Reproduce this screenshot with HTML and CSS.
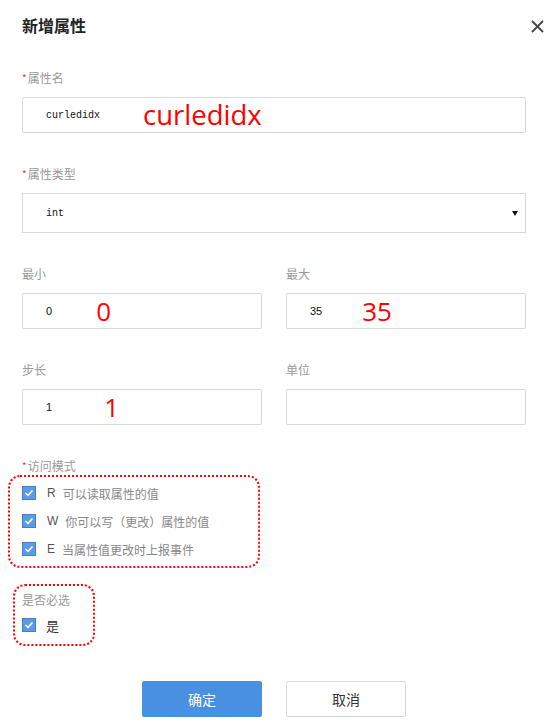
FILE: index.html
```html
<!DOCTYPE html>
<html lang="zh">
<head>
<meta charset="utf-8">
<title>新增属性</title>
<link rel="stylesheet" href="styles.css">
</head>
<body>
<div class="dialog">
  <div class="header">
    <h1 class="title">新增属性</h1>
    <button class="close" aria-label="关闭">
      <svg width="13" height="13" viewBox="0 0 13 13"><path d="M1 1 L12 12 M12 1 L1 12" stroke="#444" stroke-width="1.8" fill="none"/></svg>
    </button>
  </div>

  <div class="form">
    <div class="field first">
      <div class="label"><span class="req">*</span>属性名</div>
      <div class="input"><span class="val mono">curledidx</span><span class="note note-long">curledidx</span></div>
    </div>

    <div class="field">
      <div class="label"><span class="req">*</span>属性类型</div>
      <div class="select"><span class="val mono">int</span>
        <svg class="arrow" width="6" height="5" viewBox="0 0 6 5"><path d="M0 0 H6 L3 5 Z" fill="#111"/></svg>
      </div>
    </div>

    <div class="row">
      <div class="field">
        <div class="label">最小</div>
        <div class="input"><span class="val num">0</span><span class="note">0</span></div>
      </div>
      <div class="field">
        <div class="label">最大</div>
        <div class="input"><span class="val num">35</span><span class="note note-max">35</span></div>
      </div>
    </div>

    <div class="row">
      <div class="field">
        <div class="label">步长</div>
        <div class="input"><span class="val num">1</span><span class="note note-step">1</span></div>
      </div>
      <div class="field">
        <div class="label">单位</div>
        <div class="input"></div>
      </div>
    </div>

    <div class="field">
      <div class="label label-tight"><span class="req">*</span>访问模式</div>
      <div class="mark mark-access">
        <label class="check"><span class="box"><svg width="10" height="8" viewBox="0 0 10 8"><path d="M1.5 4 L4 6.3 L8.5 1.5" stroke="#fff" stroke-width="1.6" fill="none"/></svg></span><span class="letter">R</span>可以读取属性的值</label>
        <label class="check"><span class="box"><svg width="10" height="8" viewBox="0 0 10 8"><path d="M1.5 4 L4 6.3 L8.5 1.5" stroke="#fff" stroke-width="1.6" fill="none"/></svg></span><span class="letter">W</span>你可以写（更改）属性的值</label>
        <label class="check"><span class="box"><svg width="10" height="8" viewBox="0 0 10 8"><path d="M1.5 4 L4 6.3 L8.5 1.5" stroke="#fff" stroke-width="1.6" fill="none"/></svg></span><span class="letter">E</span>当属性值更改时上报事件</label>
      </div>
    </div>

    <div class="mark mark-required">
      <div class="label">是否必选</div>
      <label class="check dark"><span class="box"><svg width="10" height="8" viewBox="0 0 10 8"><path d="M1.5 4 L4 6.3 L8.5 1.5" stroke="#fff" stroke-width="1.6" fill="none"/></svg></span>是</label>
    </div>

    <div class="actions">
      <button class="btn primary">确定</button>
      <button class="btn">取消</button>
    </div>
  </div>
</div>
</body>
</html>
```

FILE: styles.css
```css
* { box-sizing: border-box; }
html, body { margin: 0; padding: 0; background: #fff; }
body {
  font-family: "Noto Sans CJK SC", "Noto Sans", sans-serif;
  color: #333;
  width: 554px;
  height: 725px;
  overflow: hidden;
}
.dialog { padding: 0 28px 0 22px; }
.header {
  height: 50px;
  display: flex;
  align-items: flex-start;
  justify-content: space-between;
  padding-top: 14px;
}
.title {
  margin: 0;
  font-size: 16px;
  line-height: 22px;
  font-weight: bold;
  color: #222;
}
.close {
  border: 0;
  background: none;
  padding: 0;
  margin: 6px -18px 0 0;
  width: 13px;
  height: 13px;
  display: block;
}
.close svg { display: block; }

.field { margin-top: 33px; }
.field.first { margin-top: 20px; }
.row .field { margin-top: 0; }
.row { display: grid; grid-template-columns: 240px 240px; column-gap: 24px; margin-top: 33px; }

.label {
  font-size: 12px;
  line-height: 16px;
  color: #999;
  margin-bottom: 11px;
}
.label-tight { margin-bottom: 1px; }
.req { color: #e33; font-size: 10px; margin-right: 1px; vertical-align: top; }

.input, .select {
  height: 36px;
  border: 1px solid #d9d9d9;
  border-radius: 2px;
  display: flex;
  align-items: center;
  padding-left: 23px;
  background: #fff;
}
.select {
  height: 40px;
  border-radius: 0;
  justify-content: space-between;
  padding-right: 7px;
}
.arrow { display: block; }
.val { color: #111; }
.mono { font-family: "Liberation Mono", monospace; font-size: 10px; }
.num { font-family: "Liberation Sans", sans-serif; font-size: 11px; }
.note {
  font-family: "Open Sans", sans-serif;
  font-size: 26px;
  color: #f00;
  line-height: 30px;
  margin-left: 44px;
}
.note-long { margin-left: 43px; font-size: 27.5px; }
.note-max { margin-left: 40px; }
.note-step { margin-left: 52px; }

.mark {
  border: 2px dotted #f00;
  border-radius: 12px;
}
.mark-access {
  width: 252px;
  margin-left: -14px;
  padding: 2px 0 3px 12px;
}
.mark-required {
  width: 82px;
  margin-left: -9px;
  margin-top: 16px;
  padding: 6px 0 5px 7px;
}
.mark-required .label { margin-bottom: 3px; }

.check {
  display: flex;
  align-items: center;
  height: 28px;
  font-size: 12px;
  color: #888;
}
.check.dark { color: #333; font-size: 13px; }
.box {
  width: 14px;
  height: 14px;
  background: #5b9be6;
  border: 1px solid #3f80d6;
  display: flex;
  align-items: center;
  justify-content: center;
  margin-right: 10px;
}
.box svg { display: block; }
.letter {
  font-family: "Liberation Sans", sans-serif;
  color: #555;
  margin-right: 7px;
  margin-left: 1px;
}

.actions {
  display: flex;
  justify-content: center;
  gap: 24px;
  margin-top: 35px;
}
.btn {
  width: 120px;
  height: 36px;
  border: 1px solid #d9d9d9;
  border-radius: 2px;
  background: #fff;
  font-family: "Noto Sans CJK SC", sans-serif;
  font-size: 14px;
  color: #333;
  padding: 0;
}
.btn.primary {
  background: #4a90e2;
  border-color: #4a90e2;
  color: #fff;
}
```
